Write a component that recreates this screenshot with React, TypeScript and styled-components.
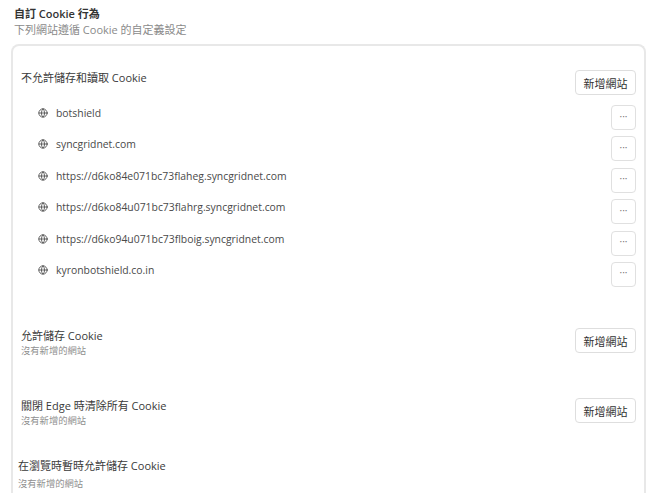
import {createGlobalStyle, styled} from 'styled-components';
import {Globe} from 'lucide-react';

const GlobalStyle = createGlobalStyle`
    html, body {
        margin: 0;
        padding: 0;
        height: 493px;
        overflow: hidden;
        background: #ffffff;
        font-family: "Open Sans", "Noto Sans CJK TC", sans-serif;
        color: #333333;
    }
`;
const Page = styled.div`
    width: 670px;
    height: 493px;
    overflow: hidden;
    padding: 6px 24px 0 11px;
    box-sizing: border-box;
`;
const Heading = styled.div`
    padding-left: 3px;
    height: 38px;
`;
const HeadingTitle = styled.div`
    font-size: 11px;
    line-height: 16px;
    font-weight: 600;
    color: #333333;
`;
const HeadingSub = styled.div`
    font-size: 11px;
    line-height: 16px;
    color: #8a8a8a;
`;
const Card = styled.div`
    border: 2px solid #e8e8e8;
    border-bottom: none;
    border-radius: 8px 8px 0 0;
    height: 460px;
    padding: 24px 8px 0 8px;
    box-sizing: border-box;
`;
const SectionRow = styled.div<{$top: number}>`
    display: flex;
    justify-content: space-between;
    align-items: flex-start;
    margin-top: ${(props) => props.$top}px;
`;
const SectionText = styled.div<{$indent?: number}>`
    margin-left: ${(props) => props.$indent ?? 0}px;
`;
const SectionTitle = styled.div`
    font-size: 11px;
    line-height: 16px;
    color: #3a3a3a;
`;
const SectionSub = styled.div<{$gap?: number}>`
    margin-top: ${(props) => props.$gap ?? 0}px;
    font-size: 9.3px;
    line-height: 14px;
    color: #8f8f8f;
`;
const AddButton = styled.button`
    width: 61px;
    height: 25px;
    padding: 0;
    border: 1px solid #dedede;
    border-radius: 4px;
    background: #ffffff;
    font-family: inherit;
    font-size: 11px;
    color: #333333;
`;
const SiteList = styled.div`
    display: flex;
    flex-direction: column;
    margin-top: 10px;
`;
const SiteRow = styled.div`
    display: flex;
    align-items: flex-start;
    justify-content: space-between;
    height: 31.4px;
`;
const SiteName = styled.div`
    display: flex;
    align-items: center;
    gap: 8px;
    height: 16px;
    padding: 0 0 0 17px;
    font-size: 10.4px;
    color: #4a4a4a;
`;
const MoreButton = styled.button`
    width: 25px;
    height: 25px;
    padding: 0 0 4px;
    border: 1px solid #e0e0e0;
    border-radius: 4px;
    background: #ffffff;
    font-family: inherit;
    font-size: 10px;
    line-height: 1;
    color: #777777;
`;

const sites = [
    'botshield',
    'syncgridnet.com',
    'https://d6ko84e071bc73flaheg.syncgridnet.com',
    'https://d6ko84u071bc73flahrg.syncgridnet.com',
    'https://d6ko94u071bc73flboig.syncgridnet.com',
    'kyronbotshield.co.in',
];

export default function App() {
    return (
        <Page>
            <GlobalStyle />
            <Heading>
                <HeadingTitle>自訂 Cookie 行為</HeadingTitle>
                <HeadingSub>下列網站遵循 Cookie 的自定義設定</HeadingSub>
            </Heading>
            <Card>
                <SectionRow $top={0}>
                    <SectionText>
                        <SectionTitle>不允許儲存和讀取 Cookie</SectionTitle>
                    </SectionText>
                    <AddButton>新增網站</AddButton>
                </SectionRow>
                <SiteList>
                    {sites.map((site) => (
                        <SiteRow key={site}>
                            <SiteName>
                                <Globe size={10} strokeWidth={2.2} color="#555555" />
                                {site}
                            </SiteName>
                            <MoreButton>···</MoreButton>
                        </SiteRow>
                    ))}
                </SiteList>
                <SectionRow $top={35}>
                    <SectionText>
                        <SectionTitle>允許儲存 Cookie</SectionTitle>
                        <SectionSub>沒有新增的網站</SectionSub>
                    </SectionText>
                    <AddButton>新增網站</AddButton>
                </SectionRow>
                <SectionRow $top={40}>
                    <SectionText>
                        <SectionTitle>關閉 Edge 時清除所有 Cookie</SectionTitle>
                        <SectionSub>沒有新增的網站</SectionSub>
                    </SectionText>
                    <AddButton>新增網站</AddButton>
                </SectionRow>
                <SectionRow $top={30}>
                    <SectionText $indent={-3}>
                        <SectionTitle>在瀏覽時暫時允許儲存 Cookie</SectionTitle>
                        <SectionSub $gap={3}>沒有新增的網站</SectionSub>
                    </SectionText>
                </SectionRow>
            </Card>
        </Page>
    );
}
